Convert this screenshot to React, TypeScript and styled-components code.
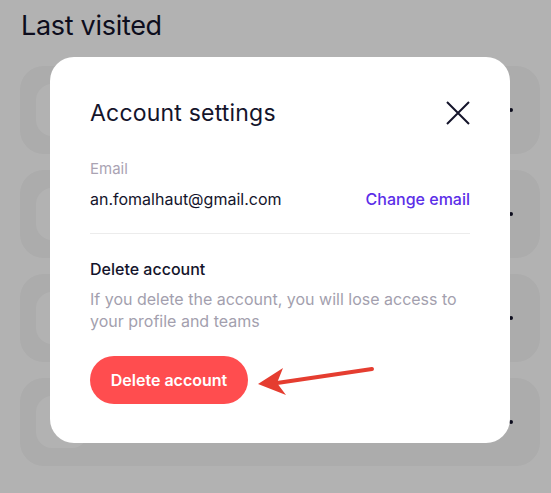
import React from 'react';
import styled, {createGlobalStyle} from 'styled-components';

const GlobalStyle = createGlobalStyle`
  html, body {
    margin: 0;
    padding: 0;
    background: #ffffff;
    font-family: Inter, 'Noto Sans', sans-serif;
    color: #14142b;
  }
`

const Page = styled.main`
  padding: 11px 11px 0 20px;
`

const PageTitle = styled.h1`
  margin: 0 0 25px 1px;
  font-size: 27px;
  font-weight: 400;
  line-height: 30px;
  letter-spacing: -0.3px;
`

const CardList = styled.div`
  display: flex;
  flex-direction: column;
  gap: 16px;
`

const Card = styled.div`
  height: 88px;
  border-radius: 24px;
  background: #f6f6f6;
  display: flex;
  align-items: center;
  padding: 0 27px 0 16px;
  justify-content: space-between;
`

const Avatar = styled.div`
  width: 52px;
  height: 52px;
  border-radius: 16px;
  background: #ffffff;
`

const Dots = styled.div`
  display: flex;
  gap: 3px;

  span {
    width: 4px;
    height: 4px;
    border-radius: 50%;
    background: #14142b;
  }
`

const Overlay = styled.div`
  position: fixed;
  inset: 0;
  background: rgba(0, 0, 0, 0.3);
  padding: 57px 0 0 50px;
`

const Modal = styled.section`
  width: 460px;
  height: 386px;
  box-sizing: border-box;
  background: #ffffff;
  border-radius: 24px;
  padding: 40px 40px 0 40px;
  position: relative;
`

const Header = styled.div`
  display: flex;
  align-items: center;
  justify-content: space-between;
  height: 32px;
  margin-bottom: 31px;
`

const ModalTitle = styled.h2`
  margin: 0;
  font-size: 23px;
  font-weight: 400;
  letter-spacing: 0.2px;
`

const CloseButton = styled.button`
  border: 0;
  background: none;
  padding: 0;
  width: 24px;
  height: 24px;
  cursor: pointer;
  color: #14142b;
  display: flex;
`

const Label = styled.div`
  font-size: 15px;
  line-height: 18px;
  color: #aaa3b3;
`

const EmailRow = styled.div`
  display: flex;
  justify-content: space-between;
  align-items: center;
  margin-top: 11px;
  font-size: 16px;
  line-height: 20px;
  padding-bottom: 24px;
  border-bottom: 1px solid #ececec;
`

const LinkButton = styled.button`
  border: 0;
  background: none;
  padding: 0;
  font: inherit;
  font-weight: 500;
  color: #5b2ee8;
  cursor: pointer;
`

const SectionTitle = styled.h3`
  margin: 25px 0 0;
  font-size: 16px;
  line-height: 20px;
  font-weight: 500;
`

const Description = styled.p`
  margin: 9px 0 0;
  font-size: 16px;
  line-height: 22px;
  color: #a39fae;
`

const DangerButton = styled.button`
  margin-top: 24px;
  height: 48px;
  width: 158px;
  border: 0;
  border-radius: 24px;
  background: #ff4d4f;
  color: #ffffff;
  font: inherit;
  font-size: 16px;
  font-weight: 600;
  cursor: pointer;
`

const Arrow = styled.svg`
  position: absolute;
  left: 205px;
  top: 307px;
`

const cards = [1, 2, 3, 4];

export default function App() {
  return (
    <>
      <GlobalStyle />
      <Page>
        <PageTitle>Last visited</PageTitle>
        <CardList>
          {cards.map((id) => (
            <Card key={id}>
              <Avatar />
              <Dots><span /><span /><span /></Dots>
            </Card>
          ))}
        </CardList>
      </Page>
      <Overlay>
        <Modal>
          <Header>
            <ModalTitle>Account settings</ModalTitle>
            <CloseButton aria-label='Close'>
              <svg width='24' height='24' viewBox='0 0 24 24' fill='none' stroke='currentColor' strokeWidth='2'>
                <path d='M1 1L23 23M23 1L1 23' />
              </svg>
            </CloseButton>
          </Header>
          <Label>Email</Label>
          <EmailRow>
            <span>an.fomalhaut@gmail.com</span>
            <LinkButton>Change email</LinkButton>
          </EmailRow>
          <SectionTitle>Delete account</SectionTitle>
          <Description>
            If you delete the account, you will lose access to your profile and teams
          </Description>
          <DangerButton>Delete account</DangerButton>
          <Arrow width='120' height='32' viewBox='0 0 120 32'>
            <path d='M22 19L117 5' stroke='#e53d30' strokeWidth='4' strokeLinecap='round' />
            <path d='M3 20L28 4L22 19L31 31Z' fill='#e53d30' />
          </Arrow>
        </Modal>
      </Overlay>
    </>
  );
}
